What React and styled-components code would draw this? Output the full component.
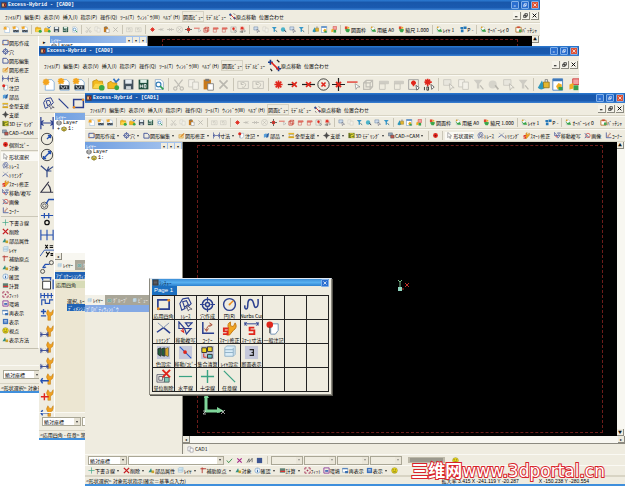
import { Fragment } from "react";
import styled, { createGlobalStyle } from "styled-components";

const GlobalStyle = createGlobalStyle`
    * {
        box-sizing: border-box;
    }

    body {
        margin: 0;
        background: white;
        color: #000;
        font-family: "Noto Sans CJK JP", "Liberation Sans", sans-serif;
        font-size: 5px;
        font-weight: 400;
        line-height: 8px;
    }

    button, input, select {
        margin: 0;
        padding: 0;
        border: 0;
        background: transparent;
        color: inherit;
        font: inherit;
    }
`;

const StyledDesktop = styled.main`
    position: relative;
    min-height: 100vh;
    overflow: hidden;
`;

const StyledWindow = styled.section`
    position: absolute;
    top: ${(prop) => prop.$top}px;
    right: ${(prop) => prop.$right}px;
    bottom: ${(prop) => prop.$bottom}px;
    left: ${(prop) => prop.$left}px;
    display: flex;
    flex-direction: column;
    overflow: hidden;
    background: #efece0;
    border-bottom: 2px solid #3f8fdc;
`;

const StyledTitleBar = styled.header`
    display: flex;
    align-items: center;
    flex: none;
    gap: 1px;
    height: 10px;
    padding: 0 1px;
    background: linear-gradient(#2c7cd4, #1957aa 25%, #1a5ab0 75%, #3d83d4);
    color: white;
`;

const StyledTitle = styled.h1`
    flex: 1;
    margin: 0;
    font-family: "Liberation Mono", monospace;
    font-size: 5px;
    font-weight: bold;
    line-height: 8px;
`;

const StyledTitleButton = styled.button`
    display: flex;
    width: 8px;
    height: 8px;
    margin-left: 1px;
    padding: 1px;
    border: 1px solid #7fb0ea;
    border-radius: 1px;
    background: ${(prop) => prop.$close ? "#dd5234" : "#2b6fd0"};
    color: white;
`;

const StyledMenuBar = styled.nav`
    display: flex;
    align-items: center;
    flex: none;
    height: ${(prop) => prop.$large ? 19 : 13}px;
    padding: 0 1px 0 5px;
    border-bottom: 1px solid #d8d4c4;
`;

const StyledMenuItems = styled.div`
    display: flex;
    align-items: center;
    flex: 1;
    gap: 3px;
`;

const StyledMenuItem = styled.button`
    display: flex;
    align-items: center;
    white-space: nowrap;
    line-height: 9px;
    box-shadow: ${(prop) => prop.$pressed ? "0 0 0 1px #d6d2c3" : "none"};
`;

const StyledMdiButton = styled.button`
    display: flex;
    width: 8px;
    height: 8px;
    margin-left: 1px;
    padding: 1px;
    border-right: 1px solid #8c8a80;
    border-bottom: 1px solid #8c8a80;
    background: #f5f3ea;
`;

const StyledToolBar = styled.div`
    display: flex;
    align-items: center;
    flex: none;
    height: ${(prop) => prop.$large ? 19 : prop.$compact ? 11 : 13}px;
    padding: 0 2px;
    border-top: 1px solid #faf9f3;
    border-bottom: 1px solid #d8d4c4;
    overflow: hidden;
`;

const StyledSeparator = styled.span`
    flex: none;
    width: 1px;
    height: 80%;
    margin: 0 2px;
    background: #c9c5b6;
`;

const StyledTool = styled.button`
    display: flex;
    align-items: center;
    flex: none;
    padding: 0 1px;
    white-space: nowrap;
    opacity: ${(prop) => prop.$faded ? 0.3 : 1};
    background: ${(prop) => prop.$pressed ? "#fbfaf5" : "transparent"};
    filter: ${(prop) => prop.$faded ? "grayscale(1)" : "none"};
`;

const StyledSpread = styled.div`
    display: flex;
    flex: auto;
    justify-content: space-between;
`;

const StyledArrow = styled.span`
    width: 0;
    height: 0;
    margin: 0 2px;
    border: 1px solid transparent;
    border-top: 2px solid #333;
    border-bottom: 0;
`;

const StyledBody = styled.div`
    display: flex;
    flex: 1;
    min-height: 0;
`;

const StyledPalette = styled.div`
    flex: none;
    align-self: flex-start;
    width: 39px;
    padding: 2px 0 2px 1px;
    border-right: 1px solid #fff;
    border-bottom: 1px solid #c4c0b0;
`;

const StyledPaletteGroup = styled.div`
    display: flex;
    flex-direction: column;
    padding-bottom: 1px;
    margin-bottom: 1px;
    border-bottom: 1px solid #cbc7b8;

    &:last-child {
        border: 0;
    }
`;

const StyledPaletteItem = styled.button`
    display: flex;
    align-items: center;
    height: 9px;
    padding-left: 1px;
    white-space: nowrap;
    background: ${(prop) => prop.$pressed ? "#faf9f4" : "transparent"};
`;

const StyledGrip = styled.div`
    display: flex;
    flex: none;
    width: 11px;
    justify-content: center;
    padding-top: 3px;
    font-size: 5px;
    line-height: 6px;
`;

const StyledIconColumn = styled.div`
    display: flex;
    flex: none;
    flex-direction: column;
    align-items: center;
    align-self: flex-start;
    gap: 2px;
    width: 16px;
    padding-top: 3px;
    border-right: 1px solid #fff;
`;

const StyledDock = styled.aside`
    display: flex;
    flex: none;
    flex-direction: column;
    width: ${(prop) => prop.$wide ? 98 : 97}px;
    border-right: 1px solid #8c8a80;
    background: ${(prop) => prop.$cream ? "#ece6d2" : "#efece0"};
    overflow: hidden;
`;

const StyledDockHeader = styled.div`
    display: flex;
    align-items: center;
    flex: none;
    height: 7px;
    padding: 0 1px;
    background: linear-gradient(to right, #6f9ee0, #a9c6ef);
    color: white;
    line-height: 7px;
`;

const StyledDockName = styled.span`
    flex: 1;
`;

const StyledDockButton = styled.button`
    display: flex;
    align-items: center;
    justify-content: center;
    width: 6px;
    height: 6px;
    margin-left: 1px;
    background: #efece0;
    color: #111;
    line-height: 5px;
`;

const StyledTree = styled.ul`
    flex: none;
    height: ${(prop) => prop.$height}px;
    margin: 0;
    padding: 0;
    background: white;
    list-style: none;
`;

const StyledTreeRow = styled.li`
    display: flex;
    align-items: center;
    gap: 1px;
    height: 6px;
    padding-left: ${(prop) => prop.$depth}px;
    font-family: "Liberation Mono", monospace;
    line-height: 6px;
`;

const StyledTabs = styled.div`
    display: flex;
    align-items: center;
    flex: none;
    height: 10px;
    background: #a9a698;
    color: #eee;
`;

const StyledTab = styled.button`
    display: flex;
    align-items: center;
    gap: 1px;
    height: 10px;
    padding: 0 2px;
    white-space: nowrap;
    background: ${(prop) => prop.$active ? "#f3f1e8" : "transparent"};
    color: ${(prop) => prop.$active ? "#111" : "inherit"};
`;

const StyledBand = styled.div`
    flex: none;
    height: 7px;
    margin: ${(prop) => prop.$gap ? "2px 0" : "0"};
    padding-left: 1px;
    white-space: nowrap;
    line-height: 7px;
    background: ${(prop) => prop.$fill};
    color: ${(prop) => prop.$ink};
`;

const StyledChoices = styled.div`
    padding: 9px 0 0 12px;
    line-height: 7px;
`;

const StyledWork = styled.div`
    display: flex;
    flex: 1;
    flex-direction: column;
    min-width: 0;
`;

const StyledView = styled.div`
    display: flex;
    flex: 1;
    min-height: 0;
`;

const StyledCanvas = styled.div`
    position: relative;
    flex: 1;
    padding: 3px 14px;
    background: black;
`;

const StyledSheet = styled.div`
    height: 100%;
    border: 1px dashed #6d1c1a;
`;

const StyledOrigin = styled.div`
    position: absolute;
    top: calc(50% - 10px);
    left: calc(50% - 2px);
    width: 14px;
`;

const StyledAxes = styled.div`
    position: absolute;
    bottom: 18px;
    left: 20px;
    width: 23px;
`;

const StyledScroll = styled.div`
    display: flex;
    flex: none;
    flex-direction: ${(prop) => prop.$vertical ? "column" : "row"};
    justify-content: space-between;
    ${(prop) => prop.$vertical ? "width: 8px;" : "height: 7px;"}
    background: #f8f7f1;
`;

const StyledScrollButton = styled.button`
    width: 7px;
    height: 7px;
    border-right: 1px solid #8c8a80;
    border-bottom: 1px solid #8c8a80;
    background: #efece0;
    color: #111;
    font-size: 4px;
    line-height: 6px;
`;

const StyledSheetTabs = styled.div`
    flex: none;
    height: 11px;
    padding-left: 2px;
    border-top: 1px solid #8c8a80;
`;

const StyledInputRow = styled.div`
    display: flex;
    align-items: center;
    flex: none;
    gap: 1px;
    height: ${(prop) => prop.$tall ? 18 : 11}px;
    padding: 0 3px;
    border-top: 1px solid #faf9f3;
`;

const StyledCombo = styled.label`
    display: flex;
    align-items: center;
    flex: none;
    width: ${(prop) => prop.$width}px;
    height: 9px;
    border: 1px solid #aaa796;
    background: ${(prop) => prop.$empty ? "#efece0" : "white"};

    select, input {
        flex: 1;
        width: 100%;
        min-width: 0;
        height: 7px;
        padding-left: 1px;
        appearance: none;
        line-height: 7px;
    }
`;

const StyledComboArrow = styled.span`
    display: flex;
    align-items: center;
    justify-content: center;
    width: 6px;
    height: 7px;
    background: #e6e2d4;
    opacity: ${(prop) => prop.$empty ? 0.5 : 1};
`;

const StyledGauge = styled.div`
    width: 37px;
    height: 6px;
    margin: 0 5px;
    border: 1px solid #bdb9a9;
    border-width: 1px 2px;
    background: #9b998d;
`;

const StyledStatus = styled.footer`
    display: flex;
    flex: none;
    height: 8px;
    padding: 0 36px 0 1px;
    white-space: nowrap;
    border-top: 1px solid #d8d4c4;
`;

const StyledStatusText = styled.span`
    flex: 1;
`;

const StyledReadout = styled.span`
    margin-left: 20px;
    font-family: "Liberation Sans", "Noto Sans CJK JP", sans-serif;
`;

const StyledLauncher = styled.section`
    position: absolute;
    top: 278px;
    left: 149px;
    padding: 0 2px 2px;
    border: 1px solid #8c8a80;
    border-top-color: #dfe9f5;
    background: #efece0;
    box-shadow: 1px 1px 0 #55534c;
`;

const StyledLauncherTitle = styled.header`
    display: flex;
    align-items: center;
    height: 7px;
    background: linear-gradient(#3d8fd8, #57b0f0 50%, #2d82cf);
    color: #082a52;
    line-height: 7px;
`;

const StyledPage = styled.button`
    display: block;
    height: 9px;
    padding: 0 4px 0 2px;
    background: #1b6fc0;
    color: white;
    font-family: "Liberation Sans", sans-serif;
    font-size: 6px;
    line-height: 9px;
`;

const StyledGrid = styled.div`
    display: grid;
    grid-template-columns: repeat(8, 22px);
    grid-auto-rows: 24px;
    border-top: 1px solid #222;
    border-left: 1px solid #222;
`;

const StyledCell = styled.button`
    display: flex;
    flex-direction: column;
    align-items: center;
    justify-content: flex-end;
    min-width: 0;
    overflow: hidden;
    white-space: nowrap;
    line-height: 7px;
    border-right: 1px solid #222;
    border-bottom: 1px solid #222;
`;

const StyledSite = styled.a`
    position: absolute;
    right: 20px;
    bottom: 8px;
    color: white;
    font-family: "DejaVu Sans", sans-serif;
    font-size: 17px;
    font-weight: normal;
    line-height: 14px;
    text-decoration: none;
    white-space: nowrap;
    paint-order: stroke fill;
    -webkit-text-stroke: 2px #d8232a;
`;

const StyledSiteName = styled.span`
    font-family: "Noto Sans CJK SC", sans-serif;
    font-size: 17px;
    font-weight: bold;
    line-height: 14px;
`;

const navy = "#2b3f8f";
const red = "#e0261c";

/*
* All drawings live on a 16 x 16 grid
* */
const key = <path d="M9 9V14h3V9q3-1 3-4V2l-2 3h-2L9 2q-3 4 0 7z" fill="#f0a020" stroke="#c07a10" strokeWidth=".6"/>;
const smallDim = <path d="M1 9v6M9 9v6M1 12h8M3 10l-2 2 2 2M7 10l2 2-2 2" stroke={navy}/>;
const page = <path d="M4 2h7l3 3v9H4z" fill="#fff" stroke="#8aa6c4"/>;
const burst = <path d="M8 3v10M3 8h10M4.500 4.500l7 7M11.500 4.500l-7 7" stroke={red} strokeWidth="2"/>;

const icons = {
    app: <><path d="M1 1h14v14H1z" fill="#56352f"/><path d="M3 4h5v8H3z" fill="#e8b078"/><path d="M9 3l4 5-4 5" stroke="#d33" strokeWidth="2"/></>,
    menu: <><path d="M1 1h14v14H1z" fill="#3b3d42"/><path d="M4 5h8M4 8h8M4 11h8" stroke="#888"/></>,
    min: <path d="M3 12h8" stroke="currentColor" strokeWidth="3"/>,
    restore: <><path d="M6 2h8v8H6zM2 7h8v7H2z" stroke="currentColor" strokeWidth="2"/></>,
    close: <path d="M2 2l12 12M14 2L2 14" stroke="currentColor" strokeWidth="3"/>,
    fresh: <><path d="M4 2h8l3 3v10H4z" fill="#fff" stroke="#7aa7d8"/><path d="M5 1v8M1 5h8M2 2l6 6M8 2L2 8" stroke="#f4a41c" strokeWidth="2"/></>,
    freshBar: <><path d="M4 2h8l3 3v10H4z" fill="#fff" stroke="#7aa7d8"/><path d="M5 0v7M1 4h8M2 1l6 6M8 1L2 7" stroke="#f4a41c" strokeWidth="2"/><path d="M3 9h12v5H3z" fill="#25303c"/><path d="M5 10l2 3M10 10l-2 3M12 10v3" stroke="#fff"/></>,
    open: <><path d="M1 4l5-2 2 2h5v9H1z" fill="#f3b91f" stroke="#c28a0c"/><path d="M4 7h11l-3 6H1z" fill="#fbd64b"/><circle cx="12" cy="12" r="3.500" fill="#39a845"/></>,
    openArrow: <><path d="M1 6l4-2 2 2h5v7H1z" fill="#f3b91f" stroke="#c28a0c"/><path d="M8 1l3 4 4-4" stroke="#2d6fc0" strokeWidth="2"/><circle cx="12" cy="12" r="3" fill="#39a845"/></>,
    save: <><path d="M2 2h12v12H2z" fill="#44525e"/><path d="M4 2h8v5H4z" fill="#e6edf2"/><path d="M5 10h6v4H5z" fill="#cfd6da"/></>,
    saveHd: <><path d="M2 2h12v12H2z" fill="#20503f"/><path d="M4 2h8v4H4z" fill="#dff0e8"/><path d="M4 8v4M7 8v4M4 10h3M9 8v4h2V8z" stroke="#fff"/></>,
    print: <>{page}<circle cx="8" cy="8" r="3" stroke="#3a81ba" strokeWidth="1.500"/><path d="M10 10l4 4" stroke="#2c9e52" strokeWidth="2"/></>,
    cut: <path d="M3 2l7 9M13 2L6 11M4 11a2 2 0 1 0 .1 0zM12 11a2 2 0 1 0 .1 0z" stroke="#555" strokeWidth="1.500"/>,
    copy: <><path d="M2 2h7v9H2z" fill="#fff" stroke="#667"/><path d="M7 5h7v9H7z" fill="#fff" stroke="#667"/></>,
    paste: <><path d="M2 2h9v12H2z" fill="#c8791b"/><path d="M4 1h5v3H4z" fill="#777"/><path d="M7 7h7v8H7z" fill="#fff" stroke="#777"/></>,
    cross: <path d="M3 3l10 10M13 3L3 13" stroke="#444" strokeWidth="2"/>,
    undo: <><path d="M1 4h13v9H1z" stroke="#555"/><path d="M6 11a3 3 0 1 0-1-4M5 5v3h3" stroke="#444"/></>,
    point: burst,
    pointEnd: <><path d="M1 8h8" stroke="#222" strokeWidth="1.500"/><path d="M6 5l6 6M12 5l-6 6" stroke={red} strokeWidth="2"/></>,
    pointMid: <><path d="M0 8h16" stroke="#222" strokeWidth="1.500"/><path d="M5 5l6 6M11 5l-6 6" stroke={red} strokeWidth="2"/></>,
    pointCircle: <><circle cx="8" cy="8" r="7" stroke="#222"/><path d="M5.500 5.500l5 5M10.500 5.500l-5 5" stroke={red} strokeWidth="2"/></>,
    pointCross: <><path d="M0 8h16M8 0v16" stroke="#222" strokeWidth="1.500"/><path d="M5 5l6 6M11 5l-6 6" stroke={red} strokeWidth="2.500"/></>,
    redLine: <><path d="M0 5h13" stroke={red} strokeWidth="1.500"/><path d="M10 7l1 7 2-3 3 0z" fill="#fff" stroke="#777" strokeWidth=".7"/></>,
    cube: <path d="M2 6h8v8H2zM5 3h8v8M2 6l3-3M10 6l3-3M10 14l3-3M5 3v8h8" stroke="#c8372d" strokeWidth="1.500"/>,
    face: <><path d="M3 4h11v3H3zM3 7h7v7H3z" stroke="#c8372d"/><path d="M3 4h11v3H3z" fill="#e36a5d"/></>,
    pointPage: <><path d="M2 2h12v12H2z" stroke="#999"/><path d="M8 3v7M5 6h6M6 4l4 4M10 4L6 8" stroke={red} strokeWidth="2"/><path d="M11 9l1 6 3-3z" fill="#fff" stroke="#555"/></>,
    pointKey: <><path d="M7 1v9M3 5h9M4 2l6 6M10 2L4 8" stroke={red} strokeWidth="2"/><path d="M3 11v4M6 11v4h2v-4z" stroke="#222"/><path d="M11 8l1 6 3-3z" fill="#fff" stroke="#555"/></>,
    pick: <><path d="M2 2h9v7H2z" fill="#cfdceb" stroke="#54789f"/><path d="M9 7l1 8 2-3 3 0z" fill="#fff" stroke="#445"/></>,
    filter: <><path d="M2 2h11L9 7v6H6V7z" fill="#3496c8"/><path d="M10 9l4 5" stroke="#256" strokeWidth="1.500"/></>,
    ball: <><circle cx="7" cy="8" r="5" fill="#4bb3c9"/><path d="M10 9l4 5" stroke="#334" strokeWidth="2"/></>,
    lock: <><path d="M1 12l5-9 4 9q-5 4-9 0z" fill="#2f97ba"/><path d="M8 5h7v7H8z" fill="#e3b62e" stroke="#927415"/><path d="M10 5V2h3v3" stroke="#777"/></>,
    pageCube: <><path d="M1 1h12v14H1z" fill="#fff" stroke="#3e79bb"/><path d="M1 1h12v3H1z" fill="#3e79bb"/><path d="M8 6l4 2v5l-5 1-2-4z" fill="#efae22"/><path d="M8 11h5v4H8z" fill="#36a04c"/></>,
    redCube: <><path d="M7 1h8v7H7z" fill="#f4a0a0" stroke="#c33"/><path d="M3 8l5-2v7l-5 1z" fill="#efae22"/><path d="M8 9h6v6H8z" fill="#36a04c"/></>,
    sheet: <><path d="M3 2h6l2 3v8H3z" fill="#fff" stroke="#9aa"/><path d="M1 5l5 4 5-2 3 6H6z" fill="#3ba64a"/><circle cx="4" cy="3" r="2" fill="#e2a023"/></>,
    sheetRed: <><path d="M2 1h6v6H2z" fill="#de4630"/><path d="M2 8l6-2 6 2-3 6H6z" fill="#3ba64a"/><path d="M8 2h4v4H8z" fill="#efae22"/></>,
    screens: <path d="M1 2h6v5H1zM8 1h7v6H8zM2 8h6v6H2z" fill="#2477b8"/>,
    batch: <><path d="M2 3h12v11H2z" fill="#fff" stroke="#b5742d" strokeWidth="2"/><path d="M5 1h6v4H5z" fill="#d04a32"/><path d="M9 8h6v6H9z" fill="#46a755"/></>,
    move: <><path d="M3 1v6M0 4h6M13 9v6M10 12h6" stroke="#113a8c" strokeWidth="2"/><path d="M4 4l9 9" stroke={red} strokeWidth="2"/><path d="M11 1l3 3M3 12l2 3" stroke="#222" strokeWidth="1.500"/></>,
    rect: <><path d="M2 3h12v10H2z" stroke={navy} strokeWidth="1.800"/><circle cx="2.500" cy="12.500" r="1.500" fill="#ee8b1c"/><circle cx="13.500" cy="3.500" r="1.500" fill="#ee8b1c"/></>,
    trace: <><path d="M5 2l6-1 3 6-5 5M5 2L2 7l2 7 4-2M5 5l4-1 2 4-4 3z" stroke={navy} strokeWidth="1.200"/><path d="M9 9l2 6 1-2 3 0z" fill="#fff" stroke="#445" strokeWidth=".8"/></>,
    line: <path d="M2 2l12 12" stroke={navy} strokeWidth="1.500"/>,
    hole: <><circle cx="8" cy="8" r="5.500" stroke={navy} strokeWidth="1.600"/><circle cx="8" cy="8" r="2.200" stroke={navy} strokeWidth="1.600"/><path d="M8 0v5M8 11v5M0 8h5M11 8h5" stroke={navy} strokeWidth="1.200"/></>,
    circle: <><circle cx="8" cy="8" r="6.300" stroke={navy} strokeWidth="1.500"/><path d="M8 8l4-4" stroke="#ee8b1c" strokeWidth="1.500"/><circle cx="8" cy="8" r="1" fill="#ee8b1c"/></>,
    radius: <><circle cx="8" cy="8" r="6.500" stroke="#333"/><path d="M8 8l4-4M9 4h3v3" stroke="#2450b0" strokeWidth="1.500"/></>,
    diameter: <><circle cx="8" cy="8" r="6.500" stroke="#333"/><path d="M4 12l8-8M4 9v3h3M9 4h3v3" stroke="#2450b0" strokeWidth="1.500"/></>,
    curve: <path d="M1 9C0 14 4 14 4 9s1-7 4-6 2 9 5 8 2-5 2-9" stroke={navy} strokeWidth="1.600"/>,
    trim: <><path d="M8 7l7 6M1 12l7-5" stroke={navy} strokeWidth="1.600"/><path d="M8 7l6-5M2 2l6 5" stroke="#7e8fae"/></>,
    moveCopy: <><path d="M1 1v7h6zM8 2h7l-4 4zM7 8h7l-5 6z" stroke={navy} strokeWidth="1.300"/><path d="M3 10l3 2-1-4" stroke={red} strokeWidth="1.200"/></>,
    corner: <><path d="M3 1v12h12" stroke={navy} strokeWidth="1.600"/><path d="M7 10q0-5 5-6M10 2l3 2-3 2M5 8l2 3 2-3" stroke="#a4442c"/></>,
    smartFix: <><path d="M7 8q-2-5 2-7v4l3 1 2-4q3 5-2 8l-4 5H5z" fill="#f2a622" stroke="#c27612"/><path d="M7 8H2v3h4v3H1" stroke={red} strokeWidth="2"/></>,
    smartDim: <><path d="M1 1v4M15 1v4M1 3h14M3 1L1 3l2 2M13 1l2 2-2 2" stroke={navy}/><path d="M11 7H6v3h5v4H5" stroke={red} strokeWidth="2"/></>,
    note: <><path d="M5 3h8v7l-3 4H5z" fill="#fff" stroke="#6f8faf"/><circle cx="4" cy="4" r="3.500" fill={red}/><path d="M4 6v7" stroke="#444"/></>,
    attr: <><path d="M1 1h14v14H1z" fill="#c5c8da"/><path d="M2 4l3-1v9l-3-2zM6 4l3-1v9l-3-1zM10 4l3-1v9l-3-1z" fill="#25603d" stroke="#181818" strokeWidth=".7"/><path d="M10 4l3-1v9l-3-1z" fill="#d5a22a"/></>,
    shift: <><path d="M1 1h14v14H1z" fill="#c5c8da"/><path d="M2 2l12 12" stroke="#2b5bc4" strokeWidth="1.200"/><circle cx="7.500" cy="7.500" r="2" fill={red}/></>,
    group: <><path d="M1 1h14v14H1z" fill="#c5c8da"/><path d="M2 3h5v5H2zM8 2h5v5H8z" fill="#f0d422" stroke="#333"/><path d="M8 10h5v4H8z" fill="#68c3cd" stroke="#333"/><path d="M4 9v4h3" stroke={red}/></>,
    layers: <path d="M3 3l2-2h9v9l-2 2H3zM3 5h9M3 8h9M12 3v9" fill="#d9ecf7" stroke="#8fb0c6"/>,
    section: <><path d="M1 1h14v14H1z" fill="#c5c8da"/><path d="M6 5h4v6H6M8 8h2" stroke="#222" strokeWidth="1.300"/></>,
    unit: <><path d="M1 6h8v8H1zM3 8h4v4H3z" stroke="#667"/><path d="M9 9h5v5H9z" fill="#7ec8b4" stroke="#566"/><path d="M7 1l8 8M15 1L7 9" stroke={red} strokeWidth="2"/></>,
    hline: <path d="M1 8h14" stroke="#39a283" strokeWidth="1.300"/>,
    plus: <path d="M1 8h14M8 1v14" stroke="#39a283" strokeWidth="1.500"/>,
    slant: <path d="M2 2l12 12" stroke="#39a283" strokeWidth="1.300"/>,
    dim: <path d="M1 1v14M15 1v14M1 8h14M4 5L1 8l3 3M12 5l3 3-3 3" stroke={navy} strokeWidth="1.400"/>,
    chamfer: <path d="M1 2l7 6V15M8 8l7-5M10 3l-2 5 5 0" stroke="#344a86" strokeWidth="1.400"/>,
    angle: <path d="M15 14H1L10 2M9 5q4 4 3 9M2 14h12" stroke="#334" strokeWidth="1.400"/>,
    gear: <><circle cx="5" cy="11" r="4" stroke="#555"/><circle cx="5" cy="11" r="2" stroke="#555"/><path d="M7 9l3-5h6" stroke="#2450b0" strokeWidth="1.500"/></>,
    ticks: <><path d="M1 4h14M5 1v6M10 1v6" stroke="#2450b0" strokeWidth="1.400"/><circle cx="8" cy="12" r="2.500" stroke="#111" strokeWidth="1.500"/></>,
    dims: <path d="M1 2v12M8 2v12M15 2v12M1 8h14" stroke="#2450b0" strokeWidth="1.300"/>,
    xy: <><path d="M0 14l5-7h11" stroke="#2450b0"/><path d="M6 1l3 4M9 1L6 5M7 9l2 3M11 9l-4 6M11 2h4M11 4h4M12 11h3M12 13h3" stroke="#111" strokeWidth="1.200"/></>,
    leader: <><circle cx="3" cy="13" r="2.300" stroke="#444"/><circle cx="13" cy="3" r="2.300" stroke="#444"/><path d="M3 9l3-4h5M7 8L4 9" stroke="#2450b0" strokeWidth="1.500"/></>,
    boxDim: <><path d="M3 6h9v9H3z" fill="#fff" stroke="#222"/><path d="M1 2h12M15 4v11M3 1v4M12 1v4" stroke="#2450b0" strokeWidth="1.500"/></>,
    ordinate: <path d="M1 1v6M5 1v6M9 1v6M13 1v6M1 4h14M2 15V9h4v4h5V9h4" stroke="#2450b0" strokeWidth="1.300"/>,
    keyPlus: <>{key}<path d="M4 1v6M1 4h6M1 9h6" stroke="#2450b0" strokeWidth="1.600"/></>,
    keyDim: <>{key}{smallDim}</>,
    keyLine: <>{key}<path d="M1 10h9M3 7l-2 3 2 3" stroke="#2450b0" strokeWidth="1.600"/></>,
    keyRed: <>{key}<path d="M1 10h9M5 6v8" stroke={red} strokeWidth="1.600"/></>,
    mold: <><path d="M1 2h13v4H1z" fill="#e5b629"/><path d="M3 6h9v4H3z" fill="#fff" stroke="#777"/><path d="M1 10h13v4H1z" fill="#d8a51d"/></>,
    parts: <><path d="M2 5l6-2v8l-6 2z" fill="#58a1dc"/><path d="M8 5l6-3-2 10-5 1z" fill="#2761a5"/></>,
    support: <path d="M8 1v14M1 8h14M5 5h6v6H5z" stroke="#444" strokeWidth="2"/>,
    solid: <><path d="M1 2h14v12H1z" fill="#65701d"/><path d="M4 4h8v4H7v4h6" stroke="#efe23c" strokeWidth="2"/></>,
    cam: <><path d="M1 2h9v7H1z" fill="#9ab" stroke="#456"/><path d="M6 7h8v7H6z" fill="#c2574a" stroke="#345"/></>,
    groupTab: <path d="M2 3h12v10H2zM5 6h6v4H5z" fill="#5f9a94" stroke="#dce8e4"/>,
    target: <><circle cx="8" cy="8" r="5.500" fill={red}/><circle cx="8" cy="8" r="2" fill="#7e1010"/></>,
    arrow: <path d="M4 1v12l3-3 2 5 2-1-2-5h4z" fill="#fff" stroke="#555"/>,
    image: <><circle cx="9" cy="8" r="5" stroke="#c33" strokeWidth="1.500"/><path d="M2 3l10 10M5 10l-3 4" stroke="#36619c" strokeWidth="2"/></>,
    edit: <><path d="M2 3h8l4 4v7H2z" stroke={navy} strokeWidth="1.800"/></>,
    modify: <><path d="M2 6h10v8H2z" fill="#f6d993" stroke="#c48929"/><path d="M5 11l8-9 2 2-8 8z" fill="#dd8527"/></>,
    remove: <path d="M2 2l12 12M14 2L2 14" stroke="#c41c20" strokeWidth="3"/>,
    aux: <path d="M1 4h8M5 1v13M8 4l6 0" stroke="#b3302a" strokeWidth="2"/>,
    object: <><path d="M1 12l6-9 3 9z" fill="#2f8f84"/><path d="M8 8h6v6H8z" fill="#caa52b"/></>,
    info: <><circle cx="8" cy="8" r="6" fill="#e6f0fb" stroke="#4a83b7"/><path d="M8 7v5M8 4v1" stroke="#235a98" strokeWidth="2"/></>,
    calc: <><path d="M2 3h12v10H2z" fill="#5b7f73"/><path d="M3 10h11" stroke="#d33" strokeWidth="3"/></>,
    fit: <path d="M2 2h4M2 2v4M14 2h-4M14 2v4M2 14h4M2 14v-4M14 14h-4M14 14v-4M6 8h4M8 6v4" stroke="#a32e55" strokeWidth="2"/>,
    env: <><path d="M2 2h12v12H2z" stroke="#8b3c9c" strokeWidth="2"/><path d="M5 7h7v4H5z" fill="#4168b8"/></>,
    redraw: <><path d="M1 3h12v9H1z" fill="#fff" stroke="#3c70b1"/><path d="M1 3h12v2H1zM7 9h7v5H7z" fill="#3c70b1"/></>,
    show: <><path d="M2 2h12v12H2z" fill="#3d72bd"/><path d="M5 6h6M5 9h6" stroke="#fff" strokeWidth="1.500"/></>,
    eye: <><circle cx="8" cy="8" r="6.500" fill="#f0dc14" stroke="#77701a"/><path d="M5 5v3M10 5v3M5 11h6" stroke="#333" strokeWidth="1.300"/></>,
    check: <path d="M2 8l4 5 8-9" stroke="#2f8a43" strokeWidth="2"/>,
    deny: <path d="M3 3l10 10M13 3L3 13" stroke="#a5298a" strokeWidth="2.500"/>,
    pen: <path d="M2 13l5-9v8l7-9v9" stroke="#444" strokeWidth="1.500"/>,
    table: <path d="M2 2h12v12H2z" fill="#3c5591"/>,
    stack: <path d="M2 5l6-3 6 3v6l-6 3-6-3zM2 5l6 3 6-3M2 8l6 3 6-3" fill="#ddd" stroke="#444" strokeWidth="1.400"/>,
    gold: <path d="M2 5l6-3 6 3v6l-6 3-6-3zM2 5l6 3 6-3M8 8v6" fill="#d9c43a" stroke="#665a12" strokeWidth="1.400"/>,
};

function Icon(props){
    return(
        <svg width={props.size} height={props.size} viewBox="0 0 16 16" fill="none" aria-hidden="true">
            {icons[props.name]}
        </svg>
    );
}

const menus = ["ﾌｧｲﾙ(F)", "編集(E)", "表示(V)", "挿入(I)", "指示(P)", "操作(Q)", "ﾂｰﾙ(T)", "ｳｨﾝﾄﾞｳ(W)", "ﾍﾙﾌﾟ(H)", "図面ﾋﾞｭｰ", "ﾓﾃﾞﾙﾋﾞｭｰ"];

/*
* A trailing "-" marks a disabled tool
* */
const toolGroups = [
    ["fresh", "freshBar", "freshBar"],
    ["open", "openArrow", "save", "saveHd", "print"],
    ["cut-", "copy-", "paste", "cross-"],
    ["undo-", "undo-"],
    ["point", "pointEnd", "pointMid", "pointCircle", "pointCross", "redLine", "cube", "face", "face", "pointPage", "pointKey"],
    ["pick", "copy", "filter", "ball", "pick", "filter"],
    ["lock", "pageCube", "redCube"],
];

const fadedSmall = ["pointEnd", "pointMid", "pointCircle", "copy"];
const fadedLarge = ["cube", "face", "pick", "copy", "filter", "ball"];

const sheetTools = [
    [["sheetRed", "図面枠"], ["sheet", "用紙 A0"], ["sheetRed", "縮尺 1.000"]],
    [["sheet", "ﾚｲﾔ 1"], ["screens", "P -"]],
    [["sheet", "ｵｰﾊﾞｰﾚｲ 0"], ["batch", "ﾊﾞｯﾁｼｬ"]],
];

const createTools = [
    ["rect", "図形作成"], ["hole", "穴"], ["edit", "図形編集"], ["modify", "図形修正"], ["dim", "寸法"], ["note", "注記"],
    ["parts", "部品"], ["mold", "金型支援"], ["support", "支援"], ["solid", "3D ﾓﾃﾞﾘﾝｸﾞ"], ["cam", "CAD->CAM"],
];

const shapeTools = [
    ["arrow", "形状選択"], ["trace", "ﾄﾚｰｽ"], ["trim", "ﾄﾘﾐﾝｸﾞ"], ["smartFix", "ｽﾏｰﾄ修正"], ["moveCopy", "移動複写"], ["image", "画像"], ["corner", "ｺｰﾅｰ"],
];

const viewTools = [
    ["plus", "下書き線", true], ["remove", "削除", true], ["object", "部品属性"], ["layers", "ﾚｲﾔ", true], ["aux", "補助原点", true], ["object", "対象"],
    ["info", "確認", true], ["calc", "計算", true], ["fit", "ﾌｨｯﾄ"], ["env", "環境"], ["redraw", "再表示"], ["show", "表示", true], ["eye", "視点"], ["object", "表示方法"],
];

const columnIcons = [
    "dim", "radius", "diameter", "chamfer", "angle", "gear", "ticks", "dims", "xy", "leader", "boxDim", "ordinate",
    "keyPlus", "keyDim", "keyDim", "keyDim", "keyLine", "keyRed", "keyLine",
];

const launcherCells = [
    ["rect", "応用四角"], ["trace", "ﾄﾚｰｽ"], ["hole", "穴作成"], ["circle", "円(R)"], ["curve", "Nurbs Cur"], null, null, null,
    ["trim", "ﾄﾘﾐﾝｸﾞ"], ["moveCopy", "移動複写"], ["corner", "ｺｰﾅｰ"], ["smartFix", "ｽﾏｰﾄ修正"], ["smartDim", "ｽﾏｰﾄ寸法"], ["note", "一般注記"], null, null,
    ["attr", "色設定"], ["shift", "移動/ｺﾋﾟｰ"], ["group", "集合清算"], ["layers", "ﾚｲﾔ設定"], ["section", "断面表示"], null, null, null,
    ["unit", "単位削除"], ["hline", "水平線"], ["plus", "十字線"], ["slant", "任意線"], null, null, null, null,
];

function WindowTop(props){
    const controls = ["min", "restore", "close"];
    const faded = props.large ? fadedLarge : fadedSmall;
    const size = props.large ? 13 : 7;

    return(
        <>
            <StyledTitleBar>
                <Icon name="app" size={6}/>
                <StyledTitle>Excess-Hybrid - [{props.title}]</StyledTitle>
                {controls.map((name) => (
                    <StyledTitleButton key={name} $close={name === "close"} aria-label={name}>
                        <Icon name={name} size={4}/>
                    </StyledTitleButton>
                ))}
            </StyledTitleBar>
            <StyledMenuBar $large={props.large}>
                <StyledMenuItems>
                    {menus.map((menu) => (
                        <StyledMenuItem key={menu} $pressed={menu === "図面ﾋﾞｭｰ"}>{menu}</StyledMenuItem>
                    ))}
                    <StyledMenuItem><Icon name="move" size={props.large ? 13 : 7}/>原点移動</StyledMenuItem>
                    <StyledMenuItem>位置合わせ</StyledMenuItem>
                </StyledMenuItems>
                {controls.map((name) => (
                    <StyledMdiButton key={name} aria-label={`sheet ${name}`}>
                        <Icon name={name} size={5}/>
                    </StyledMdiButton>
                ))}
            </StyledMenuBar>
            <StyledToolBar $large={props.large}>
                {toolGroups.map((group, index) => (
                    <Fragment key={index}>
                        {index > 0 && <StyledSeparator/>}
                        {group.map((entry, place) => {
                            const name = entry.replace("-", "");
                            return(
                                <StyledTool key={place} $faded={entry !== name || faded.includes(name)} aria-label={name}>
                                    <Icon name={name} size={size}/>
                                </StyledTool>
                            );
                        })}
                    </Fragment>
                ))}
                {!props.large && sheetTools.map((group, index) => (
                    <Fragment key={index}>
                        <StyledSeparator/>
                        <StyledSpread>
                            {group.map(([icon, label]) => (
                                <StyledTool key={label}><Icon name={icon} size={7}/>{label}</StyledTool>
                            ))}
                        </StyledSpread>
                    </Fragment>
                ))}
            </StyledToolBar>
        </>
    );
}

function LayerDock(props){
    return(
        <StyledDock $wide={props.wide} $cream={props.cream}>
            <StyledDockHeader>
                <StyledDockName>ﾚｲﾔｰ</StyledDockName>
                <StyledDockButton aria-label="left">▪</StyledDockButton>
                <StyledDockButton aria-label="pin">▪</StyledDockButton>
                <StyledDockButton aria-label="hide">▪</StyledDockButton>
            </StyledDockHeader>
            <StyledTree $height={props.treeHeight}>
                <StyledTreeRow $depth={1}><Icon name="stack" size={6}/>Layer</StyledTreeRow>
                <StyledTreeRow $depth={2}>+ <Icon name="gold" size={6}/>1:</StyledTreeRow>
            </StyledTree>
            {props.children}
        </StyledDock>
    );
}

function DockTabs(){
    return(
        <StyledTabs>
            <StyledTab $active><Icon name="layers" size={5}/>ﾚｲﾔｰ</StyledTab>
            <StyledTab><Icon name="groupTab" size={5}/>ｸﾞﾙｰﾌﾟ</StyledTab>
            <StyledTab><Icon name="layers" size={5}/>ﾋﾞｭｰ</StyledTab>
        </StyledTabs>
    );
}

function Drawing(props){
    return(
        <StyledView>
            <StyledCanvas>
                <StyledSheet/>
                {props.axes && (
                    <>
                        <StyledOrigin>
                            <svg width="14" height="12" viewBox="0 0 14 12" fill="none" aria-hidden="true">
                                <path d="M0 1l2 2 2-2M2 3v5" stroke="#79b98a"/>
                                <path d="M0 8h4v4H0z" fill="#8fd6c0"/>
                                <path d="M4 10h2M7 4l4 4M11 4l-4 4" stroke="#c22f28"/>
                            </svg>
                        </StyledOrigin>
                        <StyledAxes>
                            <svg width="23" height="24" viewBox="0 0 23 24" fill="none" aria-hidden="true">
                                <path d="M3 4V19H17" stroke="#7fd69a" strokeWidth="3"/>
                                <path d="M14 15l7 4-7 2zM1 6l2-5 3 5z" fill="#7fd69a"/>
                                <path d="M0 19h3l-3 3h3M18 18l4 4M22 18l-4 4" stroke="#ddd" strokeWidth=".7"/>
                            </svg>
                        </StyledAxes>
                    </>
                )}
            </StyledCanvas>
            <StyledScroll $vertical>
                <StyledScrollButton aria-label="up">▲</StyledScrollButton>
                <StyledScrollButton aria-label="down">▼</StyledScrollButton>
            </StyledScroll>
        </StyledView>
    );
}

function Combo(props){
    return(
        <StyledCombo $width={props.width} $empty={props.empty}>
            {props.editable
                ? <input type="text" aria-label="input"/>
                : (
                    <select aria-label="coordinates" disabled={props.empty}>
                        <option>{props.value}</option>
                    </select>
                )}
            <StyledComboArrow $empty={props.empty}><StyledArrow/></StyledComboArrow>
        </StyledCombo>
    );
}

function Launcher(){
    return(
        <StyledLauncher>
            <StyledLauncherTitle>
                <Icon name="menu" size={7}/>
                <StyledDockName>ﾗﾝﾁｬｰ</StyledDockName>
                <StyledTitleButton aria-label="close launcher"><Icon name="close" size={4}/></StyledTitleButton>
            </StyledLauncherTitle>
            <StyledPage>Page 1</StyledPage>
            <StyledGrid>
                {launcherCells.map((cell, index) => (
                    <StyledCell key={index} aria-label={cell ? cell[1] : "empty"}>
                        {cell && <><Icon name={cell[0]} size={15}/>{cell[1]}</>}
                    </StyledCell>
                ))}
            </StyledGrid>
        </StyledLauncher>
    );
}

export default function App(){
    const paletteGroups = [
        createTools,
        [["target", "個別ｺﾋﾟｰ"]],
        [["arrow", "形状選択"], ["trace", "ﾄﾚｰｽ"], ["trim", "ﾄﾘﾐﾝｸﾞ"], ["smartFix", "ｽﾏｰﾄ修正"], ["moveCopy", "移動/複写"], ["image", "画像"], ["corner", "ｺｰﾅｰ"]],
        viewTools,
    ];

    return(
        <StyledDesktop>
            <GlobalStyle/>

            <StyledWindow $top={0} $right={85} $bottom={93} $left={0}>
                <WindowTop title="CAD0"/>
                <StyledBody>
                    <StyledPalette>
                        {paletteGroups.map((group, index) => (
                            <StyledPaletteGroup key={index}>
                                {group.map(([icon, label]) => (
                                    <StyledPaletteItem key={label} $pressed={label === "形状選択"}>
                                        <Icon name={icon} size={7}/>{label}
                                    </StyledPaletteItem>
                                ))}
                            </StyledPaletteGroup>
                        ))}
                    </StyledPalette>
                    <StyledGrip>▸</StyledGrip>
                    <LayerDock wide treeHeight={200}/>
                    <Drawing/>
                </StyledBody>
                <StyledInputRow $tall>
                    <Combo width={38} value="絶対座標"/>
                </StyledInputRow>
                <StyledStatus>&lt;形状選択&gt; 対象形状指示</StyledStatus>
            </StyledWindow>

            <StyledWindow $top={46} $right={46} $bottom={46} $left={39}>
                <WindowTop title="CAD0" large/>
                <StyledToolBar $large>
                    {["trace", "line", "rect"].map((name) => (
                        <StyledTool key={name} aria-label={name}><Icon name={name} size={13}/></StyledTool>
                    ))}
                </StyledToolBar>
                <StyledBody>
                    <StyledIconColumn>
                        {columnIcons.map((name, index) => (
                            <StyledTool key={index} aria-label={name}><Icon name={name} size={14}/></StyledTool>
                        ))}
                    </StyledIconColumn>
                    <LayerDock cream treeHeight={133}>
                        <StyledScroll><StyledScrollButton aria-label="scroll left">◂</StyledScrollButton></StyledScroll>
                        <DockTabs/>
                        <StyledBand $gap $fill="#1f62b4" $ink="#ffffff">ｱﾌﾟﾘｹｰｼｮﾝｳｨﾝﾄﾞｳ</StyledBand>
                        <StyledBand $fill="#d8dcb8" $ink="#222222">応用四角</StyledBand>
                        <StyledChoices>
                            選択､ﾙｰﾄ
                            <StyledBand $fill="#1f62b4" $ink="#ffffff">ﾃﾞｨﾒﾝｼｮﾝ</StyledBand>
                        </StyledChoices>
                    </LayerDock>
                    <Drawing/>
                </StyledBody>
                <StyledInputRow $tall>
                    <Combo width={39} value="絶対座標"/>
                    <Combo width={96} editable/>
                </StyledInputRow>
                <StyledStatus>&lt;応用四角 - 任意&gt; 第1点</StyledStatus>
            </StyledWindow>

            <StyledWindow $top={93} $right={0} $bottom={0} $left={85}>
                <WindowTop title="CAD1"/>
                <StyledToolBar>
                    {createTools.map(([icon, label]) => (
                        <StyledTool key={label}><Icon name={icon} size={7}/>{label}<StyledArrow/></StyledTool>
                    ))}
                    <StyledSeparator/>
                    <StyledTool aria-label="record"><Icon name="target" size={7}/></StyledTool>
                    <StyledSeparator/>
                    <StyledSpread>
                        {shapeTools.map(([icon, label]) => (
                            <StyledTool key={label} $pressed={icon === "arrow"}><Icon name={icon} size={7}/>{label}</StyledTool>
                        ))}
                    </StyledSpread>
                </StyledToolBar>
                <StyledBody>
                    <LayerDock wide treeHeight={146}>
                        <DockTabs/>
                        <StyledBand $fill="#84a9e4" $ink="#ffffff">ﾌﾟﾛﾊﾟﾃｨｳｨﾝﾄﾞｳ</StyledBand>
                    </LayerDock>
                    <StyledWork>
                        <Drawing axes/>
                        <StyledScroll>
                            <StyledScrollButton aria-label="scroll left">◂</StyledScrollButton>
                            <StyledScrollButton aria-label="scroll right">▸</StyledScrollButton>
                        </StyledScroll>
                        <StyledSheetTabs>
                            <StyledTab $active><Icon name="copy" size={7}/>CAD1</StyledTab>
                        </StyledSheetTabs>
                    </StyledWork>
                </StyledBody>
                <StyledInputRow>
                    <Combo width={39} value="絶対座標"/>
                    <Combo width={96} editable/>
                    {["check", "deny", "pen", "table"].map((name) => (
                        <StyledTool key={name} aria-label={name}><Icon name={name} size={7}/></StyledTool>
                    ))}
                    <StyledSeparator/>
                    {[1, 2, 3, 4].map((slot) => <Combo key={slot} width={32} empty/>)}
                    <StyledGauge/>
                    <StyledTool aria-label="help"><Icon name="eye" size={7}/></StyledTool>
                </StyledInputRow>
                <StyledToolBar $compact>
                    {viewTools.slice(0, 12).map(([icon, label, more]) => (
                        <StyledTool key={label}><Icon name={icon} size={7}/>{label}{more && <StyledArrow/>}</StyledTool>
                    ))}
                    <StyledTool aria-label="view point"><Icon name="eye" size={7}/></StyledTool>
                </StyledToolBar>
                <StyledStatus>
                    <StyledStatusText>&lt;形状選択&gt; 対象形状指示(確定＝基準点入力)</StyledStatusText>
                    <StyledReadout>拡大率 3.415 X -241.119 Y -20.287</StyledReadout>
                    <StyledReadout>X -150.238 Y -280.554</StyledReadout>
                </StyledStatus>
            </StyledWindow>

            <Launcher/>
            <StyledSite href="http://www.3dportal.cn"><StyledSiteName>三维网</StyledSiteName>www.3dportal.cn</StyledSite>
        </StyledDesktop>
    );
}
